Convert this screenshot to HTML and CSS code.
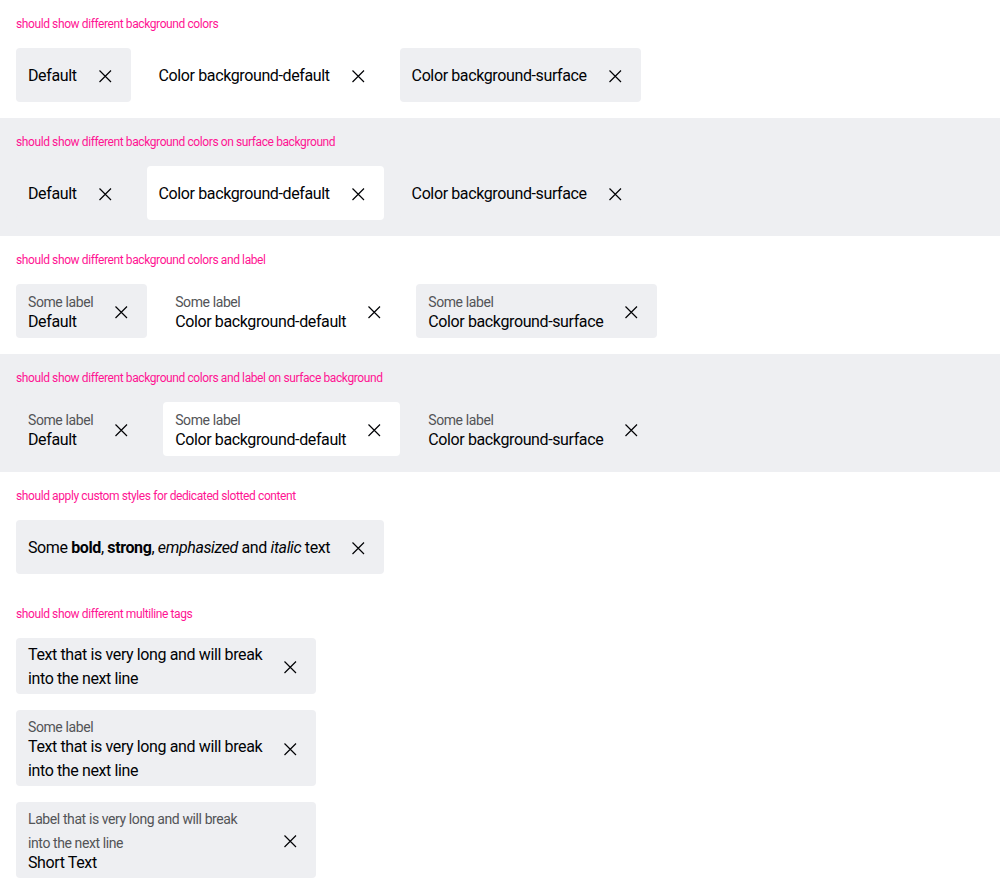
FILE: index.html
```html
<!DOCTYPE html>
<html lang="en">
<head>
<meta charset="utf-8">
<title>Tag dismissible</title>
<link rel="stylesheet" href="styles.css">
</head>
<body>
<svg class="defs" width="0" height="0" aria-hidden="true">
  <symbol id="close" viewBox="0 0 24 24"><path d="M6.5 6.5l11.5 11.5M18 6.5L6.5 18" fill="none" stroke="#010205" stroke-width="1.2"/></symbol>
</svg>

<section class="demo">
  <p class="title">should show different background colors</p>
  <div class="row">
    <div class="tag"><span class="tag__content"><span class="tag__text">Default</span></span><svg class="tag__icon"><use href="#close"/></svg></div>
    <div class="tag tag--white"><span class="tag__content"><span class="tag__text">Color background-default</span></span><svg class="tag__icon"><use href="#close"/></svg></div>
    <div class="tag"><span class="tag__content"><span class="tag__text">Color background-surface</span></span><svg class="tag__icon"><use href="#close"/></svg></div>
  </div>
</section>

<section class="demo demo--surface">
  <p class="title">should show different background colors on surface background</p>
  <div class="row">
    <div class="tag"><span class="tag__content"><span class="tag__text">Default</span></span><svg class="tag__icon"><use href="#close"/></svg></div>
    <div class="tag tag--white"><span class="tag__content"><span class="tag__text">Color background-default</span></span><svg class="tag__icon"><use href="#close"/></svg></div>
    <div class="tag"><span class="tag__content"><span class="tag__text">Color background-surface</span></span><svg class="tag__icon"><use href="#close"/></svg></div>
  </div>
</section>

<section class="demo">
  <p class="title">should show different background colors and label</p>
  <div class="row">
    <div class="tag"><span class="tag__content"><span class="tag__label">Some label</span><span class="tag__text">Default</span></span><svg class="tag__icon"><use href="#close"/></svg></div>
    <div class="tag tag--white"><span class="tag__content"><span class="tag__label">Some label</span><span class="tag__text">Color background-default</span></span><svg class="tag__icon"><use href="#close"/></svg></div>
    <div class="tag"><span class="tag__content"><span class="tag__label">Some label</span><span class="tag__text">Color background-surface</span></span><svg class="tag__icon"><use href="#close"/></svg></div>
  </div>
</section>

<section class="demo demo--surface">
  <p class="title">should show different background colors and label on surface background</p>
  <div class="row">
    <div class="tag"><span class="tag__content"><span class="tag__label">Some label</span><span class="tag__text">Default</span></span><svg class="tag__icon"><use href="#close"/></svg></div>
    <div class="tag tag--white"><span class="tag__content"><span class="tag__label">Some label</span><span class="tag__text">Color background-default</span></span><svg class="tag__icon"><use href="#close"/></svg></div>
    <div class="tag"><span class="tag__content"><span class="tag__label">Some label</span><span class="tag__text">Color background-surface</span></span><svg class="tag__icon"><use href="#close"/></svg></div>
  </div>
</section>

<section class="demo">
  <p class="title">should apply custom styles for dedicated slotted content</p>
  <div class="row">
    <div class="tag"><span class="tag__content"><span class="tag__text">Some <b>bold</b>, <strong>strong</strong>, <em>emphasized</em> and <i>italic</i> text</span></span><svg class="tag__icon"><use href="#close"/></svg></div>
  </div>
</section>

<section class="demo">
  <p class="title">should show different multiline tags</p>
  <div class="stack">
    <div class="tag tag--wide"><span class="tag__content"><span class="tag__text tag__text--lines">Text that is very long and will break<br>into the next line</span></span><svg class="tag__icon"><use href="#close"/></svg></div>
    <div class="tag tag--wide"><span class="tag__content"><span class="tag__label">Some label</span><span class="tag__text tag__text--lines">Text that is very long and will break<br>into the next line</span></span><svg class="tag__icon"><use href="#close"/></svg></div>
    <div class="tag tag--wide"><span class="tag__content"><span class="tag__label">Label that is very long and will break into the next line</span><span class="tag__text">Short Text</span></span><svg class="tag__icon"><use href="#close"/></svg></div>
  </div>
</section>
</body>
</html>
```

FILE: styles.css
```css
html, body {
  margin: 0;
  padding: 0;
  background: #ffffff;
}

body {
  font-family: Roboto, "Liberation Sans", Arial, sans-serif;
  color: #010205;
}

.defs {
  position: absolute;
  width: 0;
  height: 0;
  overflow: hidden;
}

.demo {
  display: flex;
  flex-direction: column;
  gap: 16px;
  padding: 16px;
}

.demo--surface {
  background: #eeeff2;
}

.title {
  margin: 0;
  font-size: 12px;
  line-height: 16px;
  letter-spacing: -0.4px;
  color: #ff1493;
}

.row {
  display: flex;
  flex-wrap: wrap;
  align-items: flex-start;
  gap: 16px;
}

.stack {
  display: flex;
  flex-direction: column;
  align-items: flex-start;
  gap: 16px;
}

.tag {
  display: flex;
  align-items: center;
  gap: 16px;
  box-sizing: border-box;
  min-height: 54px;
  padding: 5px 14px 3px 12px;
  border-radius: 4px;
  background: #eeeff2;
}

.tag--white {
  background: #ffffff;
}

.tag--wide {
  width: 300px;
}

.tag__content {
  display: flex;
  flex-direction: column;
  flex: 1 1 auto;
  min-width: 0;
}

.tag__label {
  font-size: 14px;
  line-height: 24px;
  letter-spacing: -0.4px;
  color: #535457;
  margin-bottom: -4px;
}

.tag__text {
  font-size: 16px;
  line-height: 24px;
  letter-spacing: -0.38px;
  color: #010205;
}

.tag__text--lines {
  white-space: nowrap;
}

.tag__text b,
.tag__text strong {
  font-weight: 700;
}

.tag__text em,
.tag__text i {
  font-style: italic;
}

.tag__icon {
  flex: none;
  width: 24px;
  height: 24px;
}
```
